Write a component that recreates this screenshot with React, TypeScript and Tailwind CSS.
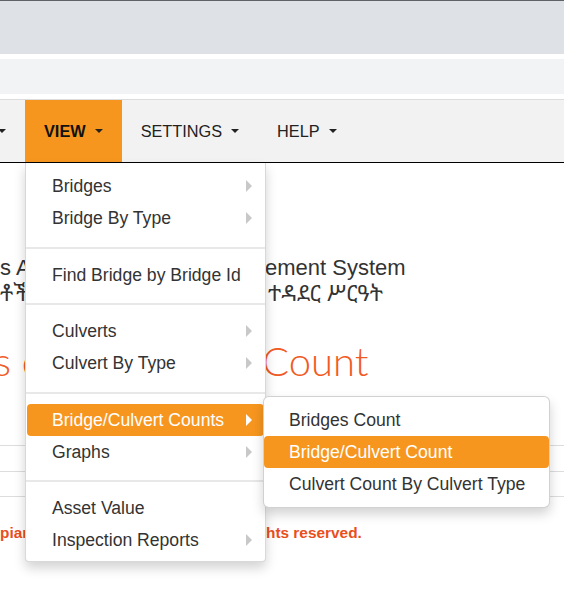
import React from "react";

const Arrow = ({ white }: { white?: boolean }) => (
  <span
    className={
      "inline-block w-0 h-0 border-y-[6px] border-y-transparent border-l-[6px] " +
      (white ? "border-l-white" : "border-l-[#c8c8c8]")
    }
  />
);

const Caret = () => (
  <span className="inline-block w-0 h-0 border-x-[4px] border-x-transparent border-t-[4.5px] border-t-[#222] ml-[9px]" />
);

const Item = ({ label, sub, active }: { label: string; sub?: boolean; active?: boolean }) => (
  <div
    className={
      "h-8 mx-px flex items-center justify-between pl-[25px] pr-[12px] rounded-[4px] whitespace-nowrap " +
      (active ? "bg-[#f7961f] text-white" : "text-[#333]")
    }
  >
    <span>{label}</span>
    {sub ? <Arrow white={active} /> : null}
  </div>
);

const Divider = ({ top, bottom }: { top: string; bottom: string }) => (
  <div className={"h-[2px] bg-[#e8e8e8] " + top + " " + bottom} />
);

export default function App() {
  return (
    <div className="relative w-[564px] h-[603px] overflow-hidden bg-white font-['Liberation_Sans',Arial,sans-serif]">
      {/* browser chrome */}
      <div className="h-px bg-[#5f6368]" />
      <div className="h-[53px] bg-[#dee1e6]" />
      <div className="h-[5px] bg-white" />
      <div className="h-[35px] bg-[#f1f3f4]" />
      <div className="h-[5px] bg-white" />

      {/* navbar */}
      <div className="relative z-20 h-[64px] border-t border-t-[#dcdcdc] border-b border-b-black bg-[#f2f2f2] flex text-[16.3px] text-[#222]">
        <div className="w-[25px] shrink-0 overflow-hidden flex justify-end items-center pr-[19px]">
          <div className="flex items-center shrink-0 whitespace-nowrap">
            <span>REPORTS</span>
            <Caret />
          </div>
        </div>
        <div className="relative px-[19px] bg-[#f7961f] flex items-center font-bold text-[#111]">
          <span>VIEW</span>
          <Caret />
          {/* dropdown */}
          <div className="absolute left-0 top-[63px] w-[241px] bg-white border border-[rgba(0,0,0,0.15)] border-t-0 rounded-b-[4px] shadow-[0_6px_12px_rgba(0,0,0,0.175)] pt-[7px] pb-[5px] font-normal text-[17.6px] text-[#333]">
            <Item label="Bridges" sub />
            <Item label="Bridge By Type" sub />
            <Divider top="mt-[13px]" bottom="mb-[10px]" />
            <Item label="Find Bridge by Bridge Id" />
            <Divider top="mt-[12px]" bottom="mb-[10px]" />
            <Item label="Culverts" sub />
            <Item label="Culvert By Type" sub />
            <Divider top="mt-[13px]" bottom="mb-[10px]" />
            <div className="relative">
              <Item label="Bridge/Culvert Counts" sub active />
              <div className="absolute left-[237px] top-[-8px] w-[287px] z-30 bg-white border border-[rgba(0,0,0,0.18)] rounded-[6px] shadow-[0_6px_12px_rgba(0,0,0,0.175)] pt-[7px] pb-[7px]">
                <div className="h-8 flex items-center pl-[25px] text-[#333] whitespace-nowrap">Bridges Count</div>
                <div className="h-8 flex items-center pl-[25px] bg-[#f7961f] text-white rounded-[4px] whitespace-nowrap">
                  Bridge/Culvert Count
                </div>
                <div className="h-8 flex items-center pl-[25px] text-[#333] whitespace-nowrap">
                  Culvert Count By Culvert Type
                </div>
              </div>
            </div>
            <Item label="Graphs" sub />
            <Divider top="mt-[12px]" bottom="mb-[10px]" />
            <Item label="Asset Value" />
            <Item label="Inspection Reports" sub />
          </div>
        </div>
        <div className="px-[19px] flex items-center">
          <span>SETTINGS</span>
          <Caret />
        </div>
        <div className="px-[19px] flex items-center">
          <span>HELP</span>
          <Caret />
        </div>
      </div>

      {/* page content */}
      <div className="pt-[93px] whitespace-nowrap">
        <div className="flex text-[22px] leading-[24px] text-[#333]">
          <span className="w-[265px] shrink-0 overflow-hidden">s Authority Bridge Manag</span>
          <span>ement System</span>
        </div>
        <div className="flex text-[22px] leading-[24px] font-normal text-[#333] font-['Noto_Sans_Ethiopic','Noto_Serif_Ethiopic',sans-serif]">
          <span className="w-[268px] shrink-0 overflow-hidden">ቶች ባለሥልጣን የድልድይ አስ</span>
          <span>ተዳደር ሥርዓት</span>
        </div>
        <div className="mt-[33px] flex text-[40px] leading-[48px] font-light text-[#f15a24] font-['Lato',sans-serif]">
          <span className="w-[262px] shrink-0 overflow-hidden">
            <span className="ml-[-6px]">s culvert </span>
          </span>
          <span>Count</span>
        </div>
        <div className="mt-[60px] h-[26px] border-t border-[#dddddd]" />
        <div className="h-[25px] border-t border-[#dddddd]" />
        <div className="border-t border-[#dddddd]" />
        <div className="mt-[25px] flex text-[15.4px] leading-[22px] font-bold text-[#e94e1b]">
          <span className="w-[266px] shrink-0 overflow-hidden">pian Roads Authority. All rig</span>
          <span>hts reserved.</span>
        </div>
      </div>
    </div>
  );
}
